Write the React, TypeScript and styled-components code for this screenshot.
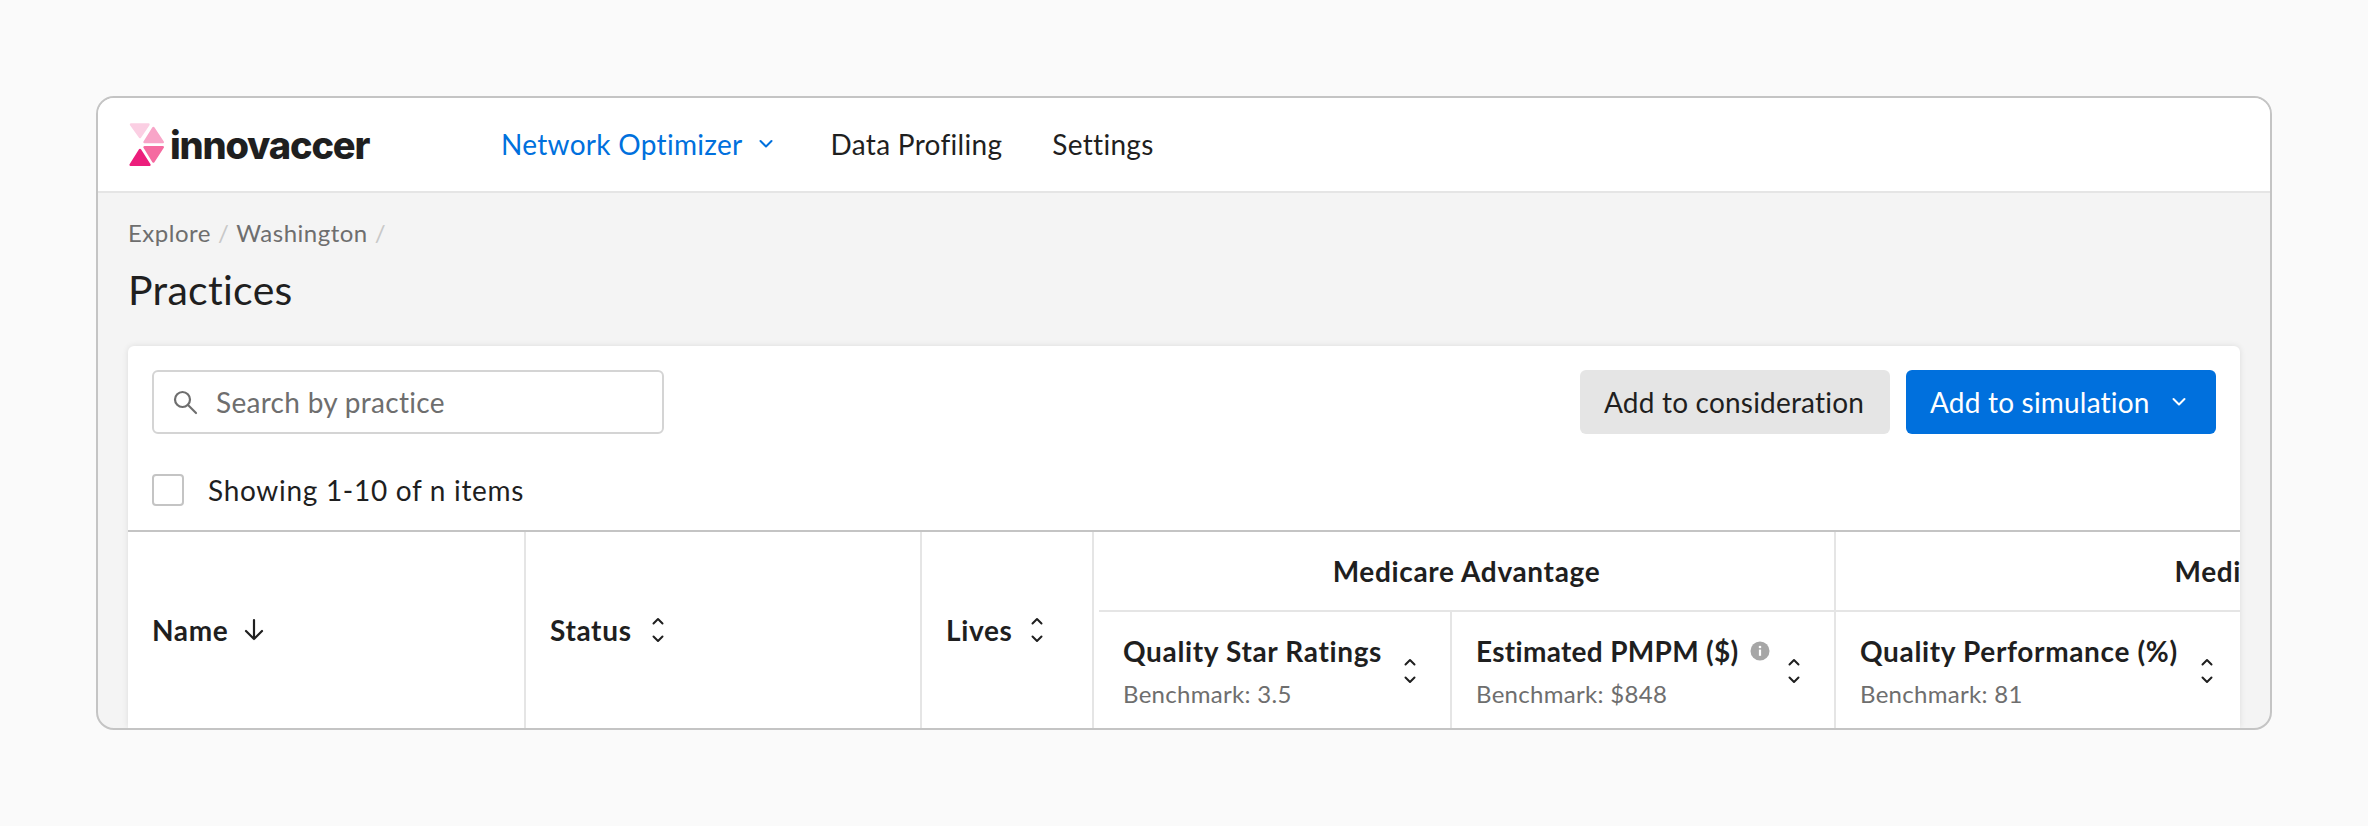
import React from 'react';
import styled, { createGlobalStyle } from 'styled-components';

const Global = createGlobalStyle`
  html, body { margin: 0; padding: 0; background: #fafafa; }
  body { font-family: "Lato", "Noto Sans", sans-serif; color: #1f1f1f; }
  * { box-sizing: border-box; }
`;
const Page = styled.div`
  width: 2368px; height: 826px; padding: 96px 96px 96px; overflow: hidden;
`;
const Frame = styled.div`
  width: 2176px; height: 634px; border: 2px solid #c4c4c4; border-radius: 18px;
  background: #f4f4f4; overflow: hidden; display: flex; flex-direction: column;
`;
const Header = styled.header`
  height: 95px; flex: none; background: #fff; border-bottom: 2px solid #e5e5e5;
  display: flex; align-items: center; padding-left: 31px;
`;
const Logo = styled.div`
  width: 372px; display: flex; align-items: center; gap: 5px; flex: none; padding-top: 1px;
`;
const LogoWord = styled.span`
  font-family: "Inter", sans-serif; font-weight: 800; font-size: 38px; line-height: 44px;
  letter-spacing: -1.2px; color: #1f1f1f;
`;
const Nav = styled.nav`
  display: flex; align-items: center; gap: 50px; padding-bottom: 2px;
`;
const NavItem = styled.span<{ $active?: boolean }>`
  display: flex; align-items: center; gap: 14px; font-size: 28px; line-height: 36px;
  letter-spacing: 0.3px; color: ${p => (p.$active ? '#0070dd' : '#1f1f1f')};
  padding-right: ${p => (p.$active ? '6px' : '0')};
`;
const Main = styled.main`
  flex: 1; min-height: 0; padding: 24px 30px 0; display: flex; flex-direction: column;
`;
const Crumbs = styled.div`
  display: flex; gap: 7px; font-size: 24px; line-height: 32px; color: #6e6e6e; letter-spacing: 0.5px;
`;
const CrumbSep = styled.span`color: #c8c8c8;`;
const Title = styled.h1`
  margin: 16px 0 0; font-size: 41px; line-height: 50px; font-weight: 400; color: #1f1f1f; letter-spacing: 0.3px;
`;
const Card = styled.section`
  margin-top: 31px; flex: 1; min-height: 0; background: #fff; border-radius: 6px 6px 0 0;
  box-shadow: 0 0 6px rgba(0,0,0,0.1); overflow: hidden; display: flex; flex-direction: column;
`;
const Toolbar = styled.div`
  display: flex; justify-content: space-between; padding: 24px 24px 0; flex: none;
`;
const SearchBox = styled.div`
  width: 512px; height: 64px; border: 2px solid #d4d4d4; border-radius: 6px;
  display: flex; align-items: center; gap: 18px; padding-left: 18px;
  font-size: 28px; color: #6e6e6e; letter-spacing: 0.3px;
`;
const Actions = styled.div`display: flex; gap: 16px;`;
const Button = styled.button<{ $primary?: boolean }>`
  height: 64px; width: 310px; border: 0; border-radius: 6px; font: inherit; font-size: 28px;
  letter-spacing: 0.2px; display: flex; align-items: center;
  gap: 20px; padding: 0 0 0 24px;
  background: ${p => (p.$primary ? '#0070dd' : '#e5e5e5')};
  color: ${p => (p.$primary ? '#fff' : '#1f1f1f')};
`;
const Selection = styled.div`
  display: flex; align-items: flex-end; gap: 24px; padding: 0 24px 24px; height: 96px; flex: none;
  font-size: 28px; letter-spacing: 0.7px; color: #1f1f1f;
`;
const Check = styled.span`
  width: 32px; height: 32px; border: 2px solid #c4c4c4; border-radius: 4px; display: block; background: #fff;
`;
const SelectionText = styled.span`line-height: 32px;`;
const Table = styled.div`
  flex: 1; display: flex; border-top: 2px solid #c4c4c4; overflow: hidden; min-height: 0;
`;
const Col = styled.div<{ $w: number; $gap: number }>`
  width: ${p => p.$w}px; flex: none; border-right: 2px solid #e5e5e5;
  display: flex; align-items: center; gap: ${p => p.$gap}px; padding-left: 24px;
`;
const HeadLabel = styled.span<{ $spacing?: number }>`
  font-size: 28px; font-weight: 700; line-height: 36px; letter-spacing: ${p => p.$spacing ?? 0.65}px;
  color: #1f1f1f; white-space: nowrap;
`;
const Group = styled.div<{ $w: number; $inset?: number; $border?: boolean }>`
  width: ${p => p.$w}px; flex: none; display: flex; flex-direction: column;
  padding-left: ${p => p.$inset || 0}px;
  border-right: ${p => (p.$border ? '2px solid #e5e5e5' : '0')};
`;
const GroupTitle = styled.div`
  height: 80px; flex: none; display: flex; align-items: center; justify-content: center;
  border-bottom: 2px solid #e5e5e5;
`;
const SubRow = styled.div`flex: 1; display: flex; min-height: 0;`;
const SubCol = styled.div<{ $w: number; $border?: boolean; $end?: number }>`
  width: ${p => p.$w}px; flex: none; display: flex; align-items: flex-start; justify-content: space-between;
  padding: 21px ${p => p.$end ?? 34}px 0 24px;
  border-right: ${p => (p.$border ? '2px solid #e5e5e5' : '0')};
`;
const SubText = styled.div`display: flex; flex-direction: column; gap: 7px;`;
const SubTitle = styled.div`display: flex; align-items: center; gap: 11px;`;
const Bench = styled.span`
  font-size: 24px; line-height: 36px; color: #6e6e6e; letter-spacing: 0.3px; white-space: nowrap;
`;
const SortSlot = styled.span`display: block; margin-top: 25px; flex: none;`;

const Chevron = ({ color, size = 18 }: { color: string; size?: number }) => (
  <svg width={size} height={size} viewBox="0 0 18 18" fill="none" stroke={color} strokeWidth="2" strokeLinecap="round" strokeLinejoin="round">
    <path d="M3.5 6 9 11.5 14.5 6" />
  </svg>
);
const Sort = () => (
  <svg width="12" height="26" viewBox="0 0 12 26" fill="none" stroke="#1f1f1f" strokeWidth="2" strokeLinecap="round" strokeLinejoin="round">
    <path d="M1.5 6.5 6 2l4.5 4.5M1.5 19.5 6 24l4.5-4.5" />
  </svg>
);
const ArrowDown = () => (
  <svg width="22" height="24" viewBox="0 0 22 24" fill="none" stroke="#1f1f1f" strokeWidth="2.2" strokeLinecap="round" strokeLinejoin="round">
    <path d="M11 2v19M3 13l8 8 8-8" />
  </svg>
);
const SearchIcon = () => (
  <svg width="26" height="26" viewBox="0 0 26 26" fill="none" stroke="#6e6e6e" strokeWidth="2.2" strokeLinecap="round">
    <circle cx="10.5" cy="10.5" r="7.5" />
    <path d="m16 16 8 8" />
  </svg>
);
const Info = () => (
  <svg width="20" height="20" viewBox="0 0 20 20">
    <circle cx="10" cy="10" r="9.5" fill="#a6a6a6" />
    <circle cx="10" cy="6" r="1.3" fill="#fff" />
    <rect x="8.9" y="8.6" width="2.2" height="6.2" fill="#fff" />
  </svg>
);
const LogoMark = () => (
  <svg width="36" height="44" viewBox="129 122 36 44" strokeLinejoin="round" strokeWidth="2.4">
    <polygon points="131,123.5 148.5,123.5 140,136" fill="#fbcfe3" stroke="#fbcfe3" />
    <polygon points="153.4,127 162.8,141.1 144.5,141.1" fill="#f8a5c8" stroke="#f8a5c8" />
    <polygon points="144.5,146.2 162.8,146.2 153.4,160.5" fill="#f56aa0" stroke="#f56aa0" />
    <polygon points="140,149 149.5,163.8 130.6,163.8" fill="#ec1e7c" stroke="#ec1e7c" />
  </svg>
);

export default function App() {
  return (
    <Page>
      <Global />
      <Frame>
        <Header>
          <Logo>
            <LogoMark />
            <LogoWord>innovaccer</LogoWord>
          </Logo>
          <Nav>
            <NavItem $active>Network Optimizer <Chevron color="#0070dd" /></NavItem>
            <NavItem>Data Profiling</NavItem>
            <NavItem>Settings</NavItem>
          </Nav>
        </Header>
        <Main>
          <Crumbs>
            <span>Explore</span><CrumbSep>/</CrumbSep><span>Washington</span><CrumbSep>/</CrumbSep>
          </Crumbs>
          <Title>Practices</Title>
          <Card>
            <Toolbar>
              <SearchBox><SearchIcon />Search by practice</SearchBox>
              <Actions>
                <Button>Add to consideration</Button>
                <Button $primary>Add to simulation <Chevron color="#fff" /></Button>
              </Actions>
            </Toolbar>
            <Selection><Check /><SelectionText>Showing 1-10 of n items</SelectionText></Selection>
            <Table>
              <Col $w={398} $gap={15}><HeadLabel>Name</HeadLabel><ArrowDown /></Col>
              <Col $w={396} $gap={20}><HeadLabel>Status</HeadLabel><Sort /></Col>
              <Col $w={172} $gap={18}><HeadLabel>Lives</HeadLabel><Sort /></Col>
              <Group $w={742} $inset={5} $border>
                <GroupTitle><HeadLabel>Medicare Advantage</HeadLabel></GroupTitle>
                <SubRow>
                  <SubCol $w={353} $border>
                    <SubText><HeadLabel>Quality Star Ratings</HeadLabel><Bench>Benchmark: 3.5</Bench></SubText>
                    <SortSlot><Sort /></SortSlot>
                  </SubCol>
                  <SubCol $w={382}>
                    <SubText>
                      <SubTitle><HeadLabel $spacing={0.3}>Estimated PMPM ($)</HeadLabel><Info /></SubTitle>
                      <Bench>Benchmark: $848</Bench>
                    </SubText>
                    <SortSlot><Sort /></SortSlot>
                  </SubCol>
                </SubRow>
              </Group>
              <Group $w={797}>
                <GroupTitle><HeadLabel>Medicaid</HeadLabel></GroupTitle>
                <SubRow>
                  <SubCol $w={405} $end={28}>
                    <SubText><HeadLabel>Quality Performance (%)</HeadLabel><Bench>Benchmark: 81</Bench></SubText>
                    <SortSlot><Sort /></SortSlot>
                  </SubCol>
                </SubRow>
              </Group>
            </Table>
          </Card>
        </Main>
      </Frame>
    </Page>
  );
}
